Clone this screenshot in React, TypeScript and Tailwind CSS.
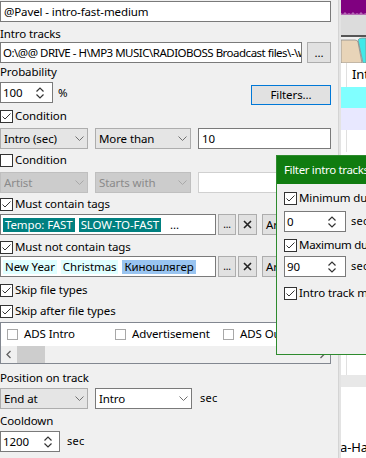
import React from "react";

const Check = ({ checked, light }: { checked: boolean; light?: boolean }) =>
  light ? (
    <svg width="11" height="11" viewBox="0 0 11 11" className="shrink-0">
      <rect x="0.5" y="0.5" width="10" height="10" fill="#fff" stroke="#a8a8a8" />
    </svg>
  ) : (
    <svg width="13" height="13" viewBox="0 0 13 13" className="shrink-0">
      <rect x="0.5" y="0.5" width="12" height="12" fill="#fff" stroke="#333" />
      {checked && <polyline points="2.5,6.5 5,9 10.5,3.5" fill="none" stroke="#333" strokeWidth="1" />}
    </svg>
  );

const Chevron = ({ color = "#707070" }: { color?: string }) => (
  <svg width="9" height="5" viewBox="0 0 9 5" className="shrink-0">
    <polyline points="0.5,0.5 4.5,4.5 8.5,0.5" fill="none" stroke={color} strokeWidth="1" />
  </svg>
);

const SpinArrows = () => (
  <svg width="8" height="12" viewBox="0 0 8 12" className="shrink-0">
    <polyline points="0.5,4.5 4,1 7.5,4.5" fill="none" stroke="#333" strokeWidth="1.2" />
    <polyline points="0.5,7.5 4,11 7.5,7.5" fill="none" stroke="#333" strokeWidth="1.2" />
  </svg>
);

const Label = ({ children, mt }: { children: React.ReactNode; mt: string }) => (
  <div className={`h-[16px] leading-[16px] whitespace-nowrap ${mt}`}>{children}</div>
);

const CheckRow = ({ checked, text, mt, tight }: { checked: boolean; text: string; mt: string; tight?: boolean }) => (
  <div className={`h-[16px] flex items-center gap-[2px] whitespace-nowrap ${mt}`}>
    <Check checked={checked} />
    <span className={tight ? "tracking-[-0.3px]" : ""}>{text}</span>
  </div>
);

const Spin = ({ value, w, pr = "pr-[8px]" }: { value: string; w: string; pr?: string }) => (
  <div className={`h-[21px] ${w} bg-white border border-[#7a7a7a] flex items-center pl-[2px] ${pr} shrink-0`}>
    <span className="flex-1">{value}</span>
    <SpinArrows />
  </div>
);

const Combo = ({ text, w, variant }: { text: string; w: string; variant: "gray" | "white" | "disabled" }) => {
  const cls =
    variant === "gray"
      ? "bg-[#e5e5e5] border-[#adadad] text-black"
      : variant === "white"
      ? "bg-white border-[#7a7a7a] text-black"
      : "bg-[#cccccc] border-[#bfbfbf] text-[#8a8a8a]";
  return (
    <div className={`h-[21px] ${w} border ${cls} flex items-center pl-[3px] pr-[3px] shrink-0`}>
      <span className="flex-1 whitespace-nowrap overflow-hidden">{text}</span>
      <Chevron color={variant === "disabled" ? "#a8a8a8" : "#707070"} />
    </div>
  );
};

const Btn = ({ children, w, cls = "" }: { children: React.ReactNode; w: string; cls?: string }) => (
  <div className={`h-[21px] ${w} bg-[#e1e1e1] border border-[#adadad] flex items-center justify-center shrink-0 ${cls}`}>
    {children}
  </div>
);

const Tag = ({ text, kind }: { text: string; kind: "teal" | "cyan" | "blue" }) => {
  const cls =
    kind === "teal" ? "bg-[#008080] text-white" : kind === "cyan" ? "bg-[#e0ffff] text-black" : "bg-[#99c4f0] text-black";
  return <span className={`h-[14px] leading-[14px] px-[2px] whitespace-nowrap shrink-0 ${cls}`}>{text}</span>;
};

const Xicon = () => (
  <svg width="9" height="9" viewBox="0 0 9 9">
    <path d="M1 1 L8 8 M8 1 L1 8" stroke="#222" strokeWidth="1.6" />
  </svg>
);

export default function App() {
  return (
    <div className="w-[366px] h-[458px] relative overflow-hidden flex bg-white text-[11.5px] tracking-[-0.1px] text-black [font-family:'Noto_Sans',sans-serif]">
      {/* left panel */}
      <div className="w-[338px] h-full bg-[#f0f0f0] flex flex-col pr-[7px] shrink-0">
        <div className="h-[21px] mt-[1px] bg-white border border-[#7a7a7a] flex items-center pl-[3px]">@Pavel - intro-fast-medium</div>
        <Label mt="mt-[4px]">Intro tracks</Label>
        <div className="h-[21px] flex gap-[5px]">
          <div className="flex-1 bg-white border border-[#7a7a7a] flex items-center pl-[2px] overflow-hidden whitespace-nowrap tracking-[-0.5px]">
            O:\@@ DRIVE - H\MP3 MUSIC\RADIOBOSS Broadcast files\-\w
          </div>
          <Btn w="w-[24px]">...</Btn>
        </div>
        <Label mt="mt-[1px]">Probability</Label>
        <div className="h-[21px] mt-[2px] flex items-start">
          <Spin value="100" w="w-[53px]" />
          <span className="ml-[5px] mt-[2px]">%</span>
          <div className="ml-auto mt-[3px] h-[20px] w-[80px] bg-[#e1e1e1] border border-[#0078d7] flex items-center justify-center">Filters...</div>
        </div>
        <CheckRow checked text="Condition" mt="mt-[5px]" />
        <div className="h-[21px] mt-[4px] flex gap-[7px]">
          <Combo text="Intro (sec)" w="w-[88px]" variant="gray" />
          <Combo text="More than" w="w-[96px]" variant="gray" />
          <div className="flex-1 bg-white border border-[#7a7a7a] flex items-center pl-[3px]">10</div>
        </div>
        <CheckRow checked={false} text="Condition" mt="mt-[3px]" />
        <div className="h-[21px] mt-[4px] flex gap-[7px]">
          <Combo text="Artist" w="w-[88px]" variant="disabled" />
          <Combo text="Starts with" w="w-[96px]" variant="disabled" />
          <div className="flex-1 bg-white border border-[#d0d0d0]"></div>
        </div>
        <CheckRow checked text="Must contain tags" mt="mt-[3px]" />
        <div className="h-[21px] mt-[2px] flex">
          <div className="w-[216px] bg-white border border-[#7a7a7a] flex items-center pl-[2px] gap-[4px] overflow-hidden">
            <Tag text="Tempo: FAST" kind="teal" />
            <Tag text="SLOW-TO-FAST" kind="teal" />
            <span className="ml-[5px]">...</span>
          </div>
          <Btn w="w-[18px]" cls="ml-[2px]">
            <span className="text-[10px]">...</span>
          </Btn>
          <Btn w="w-[19px]" cls="ml-[2px]">
            <Xicon />
          </Btn>
          <Btn w="w-[30px]" cls="ml-[5px] !justify-start pl-[3px]">Ar</Btn>
        </div>
        <CheckRow checked text="Must not contain tags" mt="mt-[4px]" />
        <div className="h-[21px] mt-[1px] flex">
          <div className="w-[216px] bg-white border border-[#7a7a7a] flex items-center pl-[2px] gap-[4px] overflow-hidden">
            <Tag text="New Year" kind="cyan" />
            <Tag text="Christmas" kind="cyan" />
            <Tag text="Киношлягер" kind="blue" />
          </div>
          <Btn w="w-[18px]" cls="ml-[2px]">
            <span className="text-[10px]">...</span>
          </Btn>
          <Btn w="w-[19px]" cls="ml-[2px]">
            <Xicon />
          </Btn>
          <Btn w="w-[30px]" cls="ml-[5px] !justify-start pl-[3px]">Ar</Btn>
        </div>
        <CheckRow checked text="Skip file types" mt="mt-[5px]" />
        <CheckRow checked text="Skip after file types" mt="mt-[5px]" />
        <div className="h-[42px] mt-[3px] bg-white border border-[#828790] flex flex-col">
          <div className="h-[22px] flex items-center whitespace-nowrap overflow-hidden">
            <span className="ml-[6px] flex items-center gap-[6px] w-[108px] shrink-0 overflow-hidden">
              <Check checked={false} light />
              ADS Intro
            </span>
            <span className="flex items-center gap-[6px] w-[108px] shrink-0 overflow-hidden">
              <Check checked={false} light />
              Advertisement
            </span>
            <span className="flex items-center gap-[6px] shrink-0">
              <Check checked={false} light />
              ADS Outro
            </span>
          </div>
          <div className="h-[17px] mt-auto bg-[#f0f0f0] flex items-center">
            <svg width="16" height="17" viewBox="0 0 16 17" className="shrink-0">
              <polyline points="9.5,5 6,8.5 9.5,12" fill="none" stroke="#606060" strokeWidth="1.3" />
            </svg>
            <div className="w-[28px] h-[17px] bg-[#cdcdcd]" />
            <svg width="16" height="17" viewBox="0 0 16 17" className="ml-auto shrink-0">
              <polyline points="6.5,5 10,8.5 6.5,12" fill="none" stroke="#606060" strokeWidth="1.3" />
            </svg>
          </div>
        </div>
        <Label mt="mt-[6px]">Position on track</Label>
        <div className="h-[21px] mt-[2px] flex items-center gap-[7px]">
          <Combo text="End at" w="w-[88px]" variant="gray" />
          <Combo text="Intro" w="w-[97px]" variant="white" />
          <span className="ml-[1px] text-[11px] tracking-[0.3px]">sec</span>
        </div>
        <Label mt="mt-[4px]">Cooldown</Label>
        <div className="h-[21px] mt-[2px] flex items-center">
          <Spin value="1200" w="w-[60px]" pr="pr-[7px]" />
          <span className="ml-[7px] text-[11px] tracking-[0.3px]">sec</span>
        </div>
      </div>
      {/* separator */}
      <div className="w-[3px] h-full bg-[#e3e3e3] border-l border-[#d4d4d4] shrink-0" />
      {/* right background app */}
      <div className="flex-1 h-full flex flex-col overflow-hidden">
        <div className="h-[15px] bg-[#800080] relative">
          <svg width="25" height="4" viewBox="0 0 25 4" className="absolute bottom-0 left-0">
            <path d="M0 4 L0 2 L2 3 L4 1 L6 3 L8 2 L10 3 L12 1 L14 3 L16 2 L18 3 L20 1 L22 3 L25 2 L25 4 Z" fill="#b46ab4" />
          </svg>
        </div>
        <div className="h-[20px] bg-[#dcdcdc]" />
        <div className="h-[2px] bg-[#555]" />
        <div className="h-[26px] bg-[#f0f0f0] relative">
          <svg width="25" height="26" viewBox="0 0 25 26" className="absolute left-0 top-0">
            <path d="M0 3 L14 3 Q16 3 17 5 L21 26 L0 26 Z" fill="#e8d4b8" stroke="#8a8a8a" strokeWidth="0.8" />
            <path d="M17 3 Q18 1 21 1 L25 1 L25 26 L22 26 Z" fill="#40e8e8" stroke="#8a8a8a" strokeWidth="0.8" />
          </svg>
        </div>
        <div className="h-[24px] bg-white flex items-center relative">
          <div className="absolute left-[5px] top-0 bottom-0 w-px bg-[#e0e0e0]" />
          <span className="ml-[11px] text-[13px]">Int</span>
        </div>
        <div className="h-[21px] bg-[#80ffff]" />
        <div className="h-[22px] bg-[#e8e8ff]" />
        <div className="h-[245px] bg-white relative">
          <div className="absolute left-[5px] top-0 h-[22px] w-px bg-[#e0e0e0]" />
          <div className="absolute left-[5px] top-[215px] h-[30px] w-px bg-[#e0e0e0]" />
        </div>
        <div className="h-[12px] bg-[#e8e8e8]" />
        <div className="flex-1 bg-white flex items-end pb-[1px]">
          <span className="text-[13px] whitespace-nowrap -ml-[1px]">a-Ha -</span>
        </div>
      </div>
      {/* popup */}
      <div className="absolute left-[276px] top-[155px] w-[100px] h-[200px] border border-[#2e8b2e] bg-[#f0f0f0] flex flex-col">
        <div className="h-[28px] bg-[#107c10] text-white flex items-center pl-[7px] whitespace-nowrap tracking-[-0.35px]">Filter intro tracks</div>
        <div className="pl-[7px] flex flex-col">
          <CheckRow checked text="Minimum duration" mt="mt-[6px]" />
          <div className="h-[21px] mt-[5px] flex items-center whitespace-nowrap">
            <Spin value="0" w="w-[62px]" pr="pr-[9px]" />
            <span className="ml-[5px] text-[11px] tracking-[0.3px]">sec</span>
          </div>
          <CheckRow checked text="Maximum duration" mt="mt-[5px]" tight />
          <div className="h-[21px] mt-[3px] flex items-center whitespace-nowrap">
            <Spin value="90" w="w-[62px]" pr="pr-[9px]" />
            <span className="ml-[5px] text-[11px] tracking-[0.3px]">sec</span>
          </div>
          <CheckRow checked text="Intro track must" mt="mt-[8px]" />
        </div>
      </div>
    </div>
  );
}
